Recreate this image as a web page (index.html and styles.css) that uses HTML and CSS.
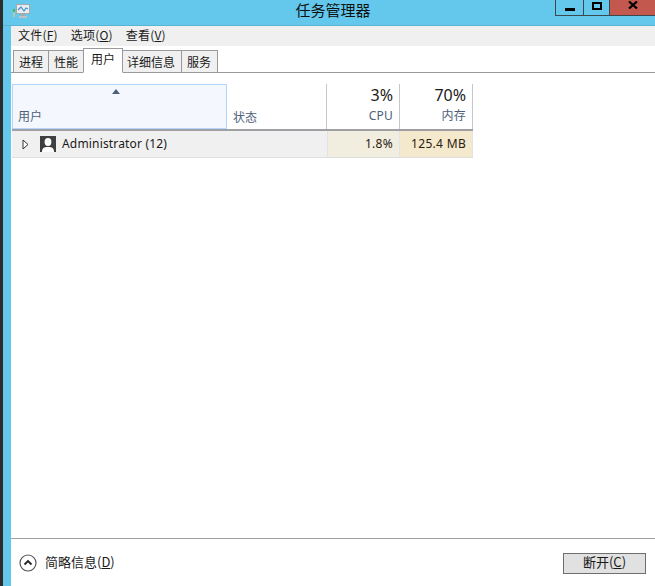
FILE: index.html
```html
<!DOCTYPE html>
<html lang="zh-CN">
<head>
<meta charset="utf-8">
<title>任务管理器</title>
<link rel="stylesheet" href="styles.css">
</head>
<body>
<div class="edge"></div>
<div class="window">
  <header class="titlebar">
    <svg class="app-icon" width="17" height="14" viewBox="0 0 17 14">
      <rect x="0" y="5" width="2" height="8" fill="#b9c4b4"/>
      <rect x="0" y="5" width="2" height="3" fill="#5fb048"/>
      <rect x="3.5" y="0.5" width="13" height="9" fill="#e6eef2" stroke="#a5a9ab"/>
      <path d="M5 6l3-3 3 4 2-3 2 1" fill="none" stroke="#4a90d0" stroke-width="1.2"/>
      <rect x="8" y="10" width="4" height="2" fill="#a5a9ab"/>
      <rect x="6" y="12" width="8" height="2" fill="#bfc3c5"/>
    </svg>
    <h1 class="title">任务管理器</h1>
    <div class="controls">
      <div class="ctl ctl-min"><span class="min-glyph"></span></div>
      <div class="ctl ctl-max"><span class="max-glyph"></span></div>
      <div class="ctl ctl-close">
        <svg width="10" height="8" viewBox="0 0 10 8"><path d="M1 0.5l8 7M9 0.5l-8 7" stroke="#000" stroke-width="2.2" fill="none"/></svg>
      </div>
    </div>
  </header>
  <div class="client">
    <nav class="menubar">
      <span class="menu">文件(<u>F</u>)</span>
      <span class="menu">选项(<u>O</u>)</span>
      <span class="menu">查看(<u>V</u>)</span>
    </nav>
    <div class="tabs">
      <span class="tab">进程</span>
      <span class="tab">性能</span>
      <span class="tab active">用户</span>
      <span class="tab">详细信息</span>
      <span class="tab">服务</span>
    </div>
    <main class="panel">
      <div class="thead">
        <div class="th th-user">
          <svg class="sort" width="8" height="5" viewBox="0 0 8 5"><path d="M4 0l4 5H0z" fill="#4c607a"/></svg>
          <span class="th-label">用户</span>
        </div>
        <div class="th th-status"><span class="th-label">状态</span></div>
        <div class="th th-num th-cpu"><span class="pct">3%</span><span class="th-label">CPU</span></div>
        <div class="th th-num th-mem"><span class="pct">70%</span><span class="th-label">内存</span></div>
      </div>
      <div class="row">
        <div class="cell cell-name">
          <svg class="expander" width="7" height="11" viewBox="0 0 7 11"><path d="M1 1l5 4.5L1 10z" fill="#fff" stroke="#333"/></svg>
          <svg class="avatar" width="16" height="16" viewBox="0 0 16 16">
            <rect width="16" height="16" fill="#3f3f3f"/>
            <ellipse cx="8" cy="6" rx="3.4" ry="4" fill="#fff"/>
            <path d="M2 16c0-4 2-5 6-5s6 1 6 5z" fill="#fff"/>
          </svg>
          <span class="name">Administrator (12)</span>
        </div>
        <div class="cell cell-status"></div>
        <div class="cell cell-num cell-cpu">1.8%</div>
        <div class="cell cell-num cell-mem">125.4 MB</div>
      </div>
    </main>
    <footer class="footer">
      <span class="fewer">
        <svg width="18" height="18" viewBox="0 0 18 18">
          <circle cx="9" cy="9" r="8" fill="#fff" stroke="#555" stroke-width="1.2"/>
          <path d="M5.5 10.5L9 7l3.5 3.5" fill="none" stroke="#222" stroke-width="1.8"/>
        </svg>
        <span class="fewer-label">简略信息(<u>D</u>)</span>
      </span>
      <button class="btn" type="button">断开(<u>C</u>)</button>
    </footer>
  </div>
</div>
</body>
</html>
```
FILE: styles.css
```css
* { box-sizing: border-box; }
html, body { margin: 0; height: 100%; }
body {
  display: flex;
  width: 655px;
  height: 586px;
  overflow: hidden;
  background: #fff;
  color: #1a1a1a;
  font-family: "Noto Sans", "Noto Sans CJK SC", sans-serif;
  font-size: 12px;
}
.edge { width: 3px; background: #2c2c2c; flex: none; }
.window { flex: 1; display: flex; flex-direction: column; min-width: 0; }

.titlebar {
  height: 26px;
  flex: none;
  background: #63c8ec;
  display: flex;
  align-items: flex-start;
  position: relative;
  border-bottom: 1px solid #5cb4d4;
}
.app-icon { margin: 4px 0 0 10px; }
.title {
  position: absolute;
  left: 8px;
  right: 0;
  top: 0;
  margin: 0;
  text-align: center;
  font-size: 15px;
  font-weight: 400;
  line-height: 20px;
  color: #111;
  font-family: "Noto Sans CJK SC", sans-serif;
}
.controls {
  margin-left: auto;
  display: flex;
  height: 16px;
  border: 1px solid #3c4850;
  border-top: 0;
  border-right: 0;
  position: relative;
}
.ctl { display: flex; align-items: center; justify-content: center; height: 15px; }
.ctl-min { width: 28px; border-right: 1px solid #3c4850; }
.ctl-max { width: 26px; border-right: 1px solid #3c4850; }
.ctl-close { width: 45px; background: #c2584e; }
.min-glyph { width: 10px; height: 3px; background: #000; margin-top: 3px; }
.max-glyph { width: 10px; height: 8px; border: 2px solid #000; margin-top: -4px; }
.ctl-close svg { margin-top: -5px; }

.client {
  flex: 1;
  display: flex;
  flex-direction: column;
  border-left: 8px solid #63c8ec;
  min-height: 0;
}
.menubar {
  height: 20px;
  background: #f0f0f0;
  display: flex;
  gap: 13px;
  padding: 0 0 0 7px;
  line-height: 18px;
  letter-spacing: 0.2px;
  flex: none;
  font-family: "Noto Sans CJK SC", sans-serif;
}
.tabs {
  display: flex;
  align-items: flex-end;
  height: 27px;
  flex: none;
  padding-left: 2px;
  border-bottom: 1px solid #9a9a9e;
  font-family: "Noto Sans CJK SC", sans-serif;
}
.tab {
  height: 23px;
  margin-bottom: -1px;
  padding: 0 3px;
  line-height: 21px;
  background: #f0f0f0;
  border: 1px solid #9a9a9e;
  margin-right: -1px;
}
.tab:nth-child(1) { width: 36px; padding-left: 5px; }
.tab:nth-child(2) { width: 36px; padding-left: 5px; }
.tab:nth-child(3) { width: 40px; padding-left: 7px; }
.tab:nth-child(4) { width: 60px; padding-left: 4px; }
.tab:nth-child(5) { width: 37px; padding-left: 5px; }
.tab.active {
  height: 25px;
  background: #fff;
  border-bottom-color: #fff;
  line-height: 19px;
  position: relative;
  z-index: 1;
}

.panel { flex: 1; min-height: 0; padding: 11px 0 0 1px; }
.thead {
  display: flex;
  height: 47px;
  width: 461px;
  border-bottom: 2px solid #a0a0a4;
  font-family: "Noto Sans CJK SC", sans-serif;
}
.th {
  display: flex;
  flex-direction: column;
  height: 45px;
  color: #4c607a;
  border-right: 1px solid #c4c8cc;
}
.th-label { line-height: 16px; margin-top: auto; padding-bottom: 4px; }
.th-user {
  width: 215px;
  background: #f4f8fe;
  border: 1px solid #b4d6fc;
  padding-left: 5px;
  position: relative;
}
.sort { position: absolute; left: 99px; top: 4px; }
.th-status { width: 100px; padding-left: 6px; }
.th-num { align-items: flex-end; padding-right: 6px; }
.th-cpu { width: 73px; }
.th-mem { width: 73px; }
.pct {
  font-family: "Noto Sans", sans-serif;
  font-size: 16px;
  line-height: 20px;
  margin-top: 1px;
  color: #1a1a1a;
}
.th-num .th-label { font-family: "Noto Sans", "Noto Sans CJK SC", sans-serif; letter-spacing: 0.2px; padding-bottom: 5px; }

.row {
  display: flex;
  width: 461px;
  height: 27px;
  border-bottom: 1px solid #dedede;
}
.cell { display: flex; align-items: center; height: 26px; }
.cell-name { width: 215px; background: #f0f0f0; padding-left: 10px; }
.cell-status { width: 100px; background: #f0f0f0; }
.cell-num {
  width: 73px;
  justify-content: flex-end;
  padding: 0 6px 1px 0;
  border-right: 1px solid #dee4e8;
  color: #2a2010;
  letter-spacing: 0.3px;
}
.cell-cpu { background: #f1eee0; border-left: 1px solid #dee4e8; }
.cell-mem { background: #f5e9cd; }
.expander { flex: none; }
.avatar { margin-left: 11px; flex: none; }
.name { margin-left: 6px; padding-bottom: 2px; letter-spacing: 0.17px; }

.footer {
  flex: none;
  height: 48px;
  border-top: 1px solid #a0a0a0;
  display: flex;
  align-items: center;
  justify-content: space-between;
  padding: 0 9px 0 8px;
  font-family: "Noto Sans CJK SC", sans-serif;
  font-size: 13px;
}
.fewer { display: flex; align-items: center; gap: 8px; margin-top: 1px; }
.fewer-label { line-height: 18px; padding-bottom: 2px; }
.btn {
  width: 83px;
  height: 21px;
  margin-top: 1px;
  padding: 0 0 3px;
  background: #e1e1e1;
  border: 1px solid #6e6e6e;
  font: inherit;
  line-height: 15px;
  color: #1a1a1a;
}
```
